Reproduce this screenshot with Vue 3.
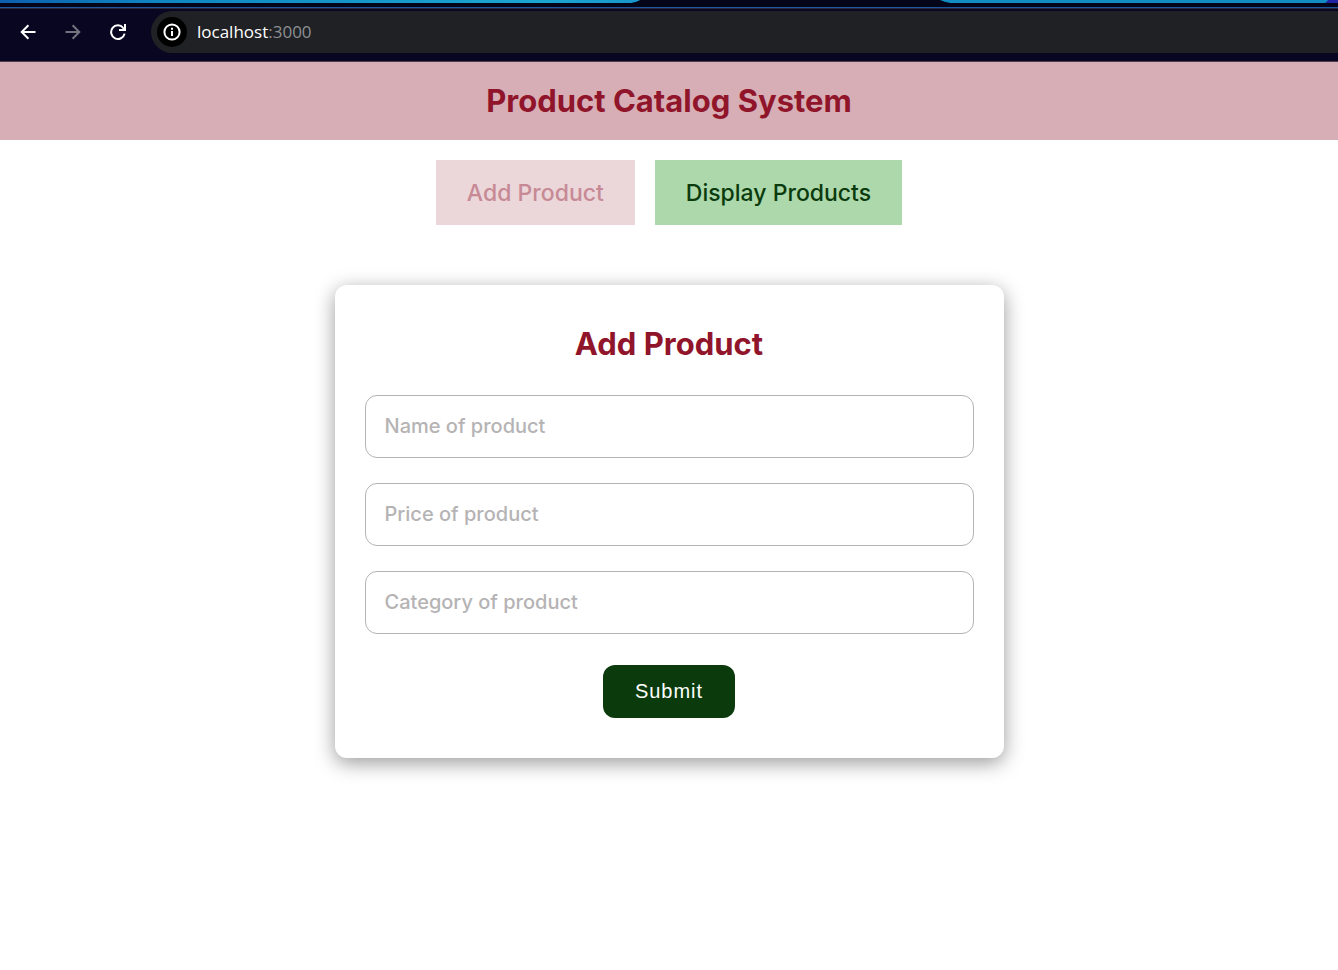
<script setup>
import { reactive, ref } from 'vue'

const fields = [
  { id: 'name', label: 'Name of product' },
  { id: 'price', label: 'Price of product' },
  { id: 'category', label: 'Category of product' },
]
const product = reactive({ name: '', price: '', category: '' })
const view = ref('add')
</script>

<template>
  <div class="browser">
    <div class="tab-strip">
      <svg class="strip-left" viewBox="0 0 640 3" preserveAspectRatio="none" aria-hidden="true">
        <defs>
          <linearGradient id="strip-blue">
            <stop offset="0" stop-color="#0c5fae" />
            <stop offset="0.25" stop-color="#0f86c2" />
            <stop offset="0.85" stop-color="#1ba6d2" />
            <stop offset="1" stop-color="#1796cb" />
          </linearGradient>
        </defs>
        <path d="M0 0H638Q635 2 629 3H0Z" fill="url(#strip-blue)" />
      </svg>
      <svg class="strip-right" viewBox="0 0 396 3" preserveAspectRatio="none" aria-hidden="true">
        <path d="M0 0H396V3H13Q7 2 3 0Z" fill="#118bc2" />
        <path d="M386 0H396V3H383Z" fill="#2024a5" />
      </svg>
    </div>
    <div class="toolbar">
      <nav class="nav-buttons" aria-label="Browser">
        <button type="button" class="nav-button" aria-label="Back">
          <svg viewBox="0 0 16 16"><path d="M15.5 8H2M8.4 1.2L1.7 8L8.4 14.8" /></svg>
        </button>
        <button type="button" class="nav-button muted" aria-label="Forward">
          <svg viewBox="0 0 16 16"><path d="M0.5 8H14M7.6 1.2L14.3 8L7.6 14.8" /></svg>
        </button>
        <button type="button" class="nav-button" aria-label="Reload">
          <svg viewBox="0 0 16 16">
            <path d="M13.2 3.8A6.8 6.8 0 1 0 14.6 9.6" />
            <path class="tip" d="M16 0V7H9V5H12L14 3V0Z" />
          </svg>
        </button>
      </nav>
      <div class="address">
        <button type="button" class="site-info" aria-label="Site information">
          <svg viewBox="0 0 18 18">
            <circle cx="9" cy="9" r="7.6" />
            <path d="M9 8V13M9 4.8V6.8" />
          </svg>
        </button>
        <span class="url">localhost<span class="port">:3000</span></span>
      </div>
    </div>
  </div>

  <header class="banner">
    <h1>Product Catalog System</h1>
  </header>

  <main>
    <div class="views">
      <button type="button" class="view add" :disabled="view === 'add'" @click="view = 'add'">Add Product</button>
      <button type="button" class="view display" @click="view = 'display'">Display Products</button>
    </div>

    <form class="card" @submit.prevent>
      <h2>Add Product</h2>
      <div class="fields">
        <input
          v-for="field in fields"
          :id="field.id"
          :key="field.id"
          v-model="product[field.id]"
          type="text"
          :placeholder="field.label"
          :aria-label="field.label"
        />
      </div>
      <button type="submit" class="submit">Submit</button>
    </form>
  </main>
</template>

<style>
body {
  background: #fff;
  font-family: Inter, sans-serif;
  font-optical-sizing: none;
}
</style>

<style scoped>
button,
input {
  font-family: inherit;
  font-optical-sizing: inherit;
  box-sizing: border-box;
}

button {
  border: 0;
  cursor: pointer;
}

.browser {
  background: #080621;
  border-bottom: 1px solid #4c3c4c;
}

.tab-strip {
  display: flex;
  justify-content: space-between;
  height: 7px;
  background: #05051a;
  border-bottom: 1px solid #1c57a0;
}

.strip-left,
.strip-right {
  display: block;
  height: 3px;
}

.strip-left {
  width: 48%;
}

.strip-right {
  width: 30%;
}

.toolbar {
  display: flex;
  align-items: center;
  gap: 25px;
  padding: 2px 0 8px 20px;
  border-top: 1px solid #29283a;
}

.nav-buttons {
  display: flex;
  gap: 29px;
}

.nav-button {
  display: grid;
  width: 16px;
  height: 18px;
  padding: 0;
  place-items: center;
  background: none;
  color: #fff;
}

.muted {
  color: #74727f;
}

.nav-button svg {
  width: 16px;
  height: 16px;
}

.nav-button path {
  fill: none;
  stroke: currentColor;
  stroke-width: 2;
}

.nav-button .tip {
  fill: currentColor;
  stroke: none;
}

.address {
  display: flex;
  flex: 1;
  align-items: center;
  gap: 10px;
  height: 42px;
  padding-left: 6px;
  border-radius: 21px 0 0 21px;
  background: #202124;
}

.site-info {
  display: grid;
  width: 30px;
  height: 30px;
  padding: 0;
  place-items: center;
  border-radius: 50%;
  background: #000;
}

.site-info svg {
  width: 18px;
  height: 18px;
  fill: none;
  stroke: #fff;
  stroke-width: 2;
}

.url {
  color: #fff;
  font: 17px/24px "Open Sans", "Noto Sans", sans-serif;
}

.port {
  color: #8d9094;
}

.banner {
  padding: 20px;
  background: #d7aeb6;
}

h1,
h2 {
  margin: 0;
  color: #90152a;
  font-size: 31px;
  font-weight: 700;
  line-height: 38px;
  text-align: center;
}

.views {
  display: flex;
  justify-content: center;
  gap: 20px;
  padding: 20px;
}

.view {
  padding: 19px 31px 17px;
  font-size: 23px;
  font-weight: 500;
  line-height: 29px;
}

.add {
  background: #ebd6da;
  color: #c78a95;
}

.display {
  background: #add8ab;
  color: #0b3b0c;
}

.card {
  box-sizing: border-box;
  width: 50%;
  margin: 40px auto;
  padding: 40px 30px;
  border-radius: 12px;
  background: #fff;
  box-shadow: 0 5px 20px rgb(0 0 0 / 40%);
}

.fields {
  display: grid;
  gap: 25px;
  margin: 32px 0 31px;
}

.fields input {
  width: 100%;
  min-width: 0;
  height: 63px;
  padding: 0 19px 2px;
  border: 1px solid #b5b3b4;
  border-radius: 12px;
  background: #fff;
  color: #333;
  font-size: 20px;
  font-weight: 500;
}

.fields input::placeholder {
  color: #b5b3b4;
  opacity: 1;
}

.submit {
  display: block;
  margin: 0 auto;
  padding: 14px 32px;
  border-radius: 12px;
  background: #0b3b0c;
  color: #fff;
  font-family: "Liberation Sans", Arial, sans-serif;
  font-size: 20px;
  line-height: 25px;
  letter-spacing: 1px;
}
</style>
